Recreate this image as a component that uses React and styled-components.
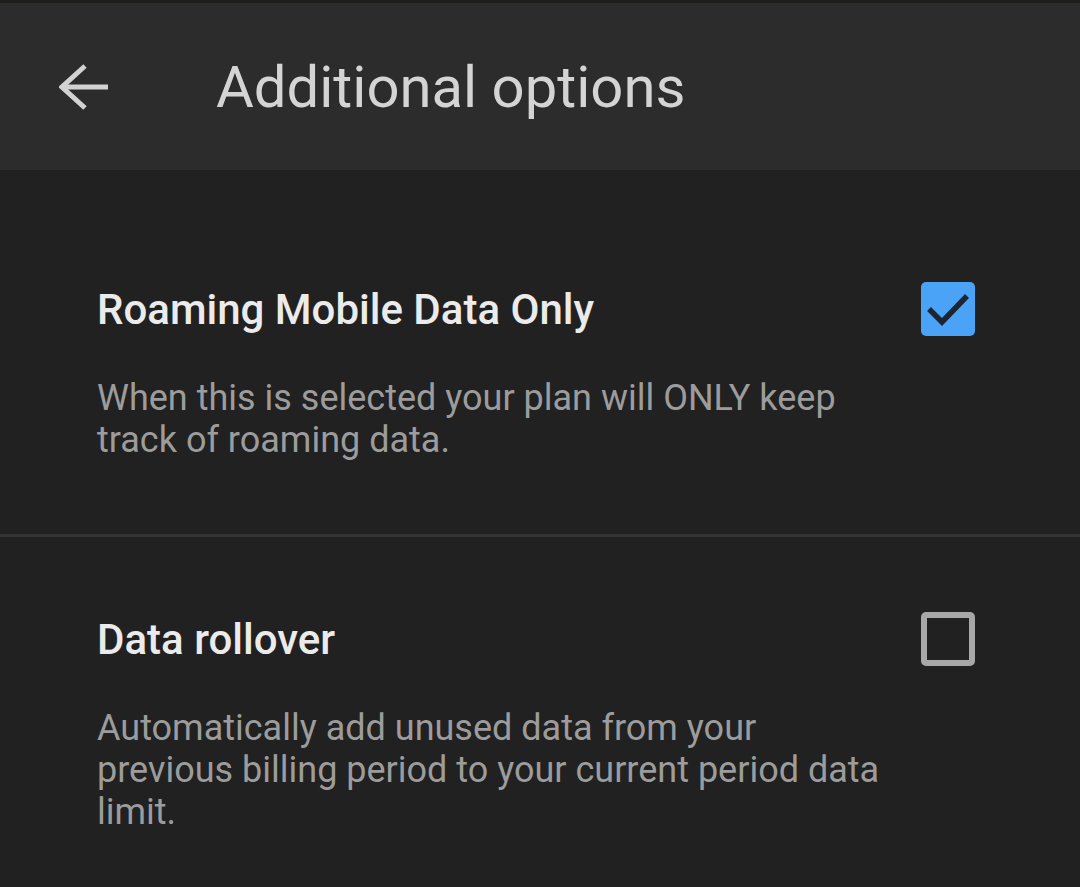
import React, { useState } from "react";
import styled, { createGlobalStyle } from "styled-components";

const GlobalStyle = createGlobalStyle`
  html, body {
    margin: 0;
    padding: 0;
    background: #212121;
  }
  body {
    font-family: Roboto, "Noto Sans", sans-serif;
    -webkit-font-smoothing: antialiased;
  }
  * { box-sizing: border-box; }
`;

const Page = styled.div`
  min-height: 100vh;
  background: #212121;
  display: flex;
  flex-direction: column;
`;

const StatusStrip = styled.div`
  height: 3px;
  background: #1d1e1c;
`;

const Header = styled.header`
  height: 167px;
  background: #2c2c2c;
  display: flex;
  align-items: center;
  padding-left: 59px;
`;

const BackButton = styled.button`
  display: flex;
  align-items: center;
  justify-content: center;
  padding: 0;
  border: none;
  background: transparent;
  color: #d2d2d2;
  cursor: pointer;
`;

const Title = styled.h1`
  margin: 0 0 0 107px;
  font-size: 58px;
  font-weight: 400;
  color: #d4d4d4;
  letter-spacing: 0;
`;

const List = styled.div`
  padding-top: 37px;
`;

const Row = styled.div`
  padding: 78px 105px 73px 97px;
  border-bottom: ${(p) => (p.$divider ? "3px solid #343434" : "none")};
`;

const RowHead = styled.div`
  display: flex;
  align-items: center;
  justify-content: space-between;
  height: 48px;
`;

const RowTitle = styled.div`
  font-size: 42px;
  font-weight: 500;
  color: #ebebeb;
`;

const Description = styled.p`
  margin: 44px 0 0;
  max-width: 800px;
  font-size: 36px;
  line-height: 42px;
  color: #9c9c9c;
`;

const Box = styled.button`
  width: 54px;
  height: 54px;
  padding: 0;
  border-radius: 5px;
  cursor: pointer;
  display: flex;
  align-items: center;
  justify-content: center;
  background: ${(p) => (p.$checked ? "#4ba3f7" : "transparent")};
  border: ${(p) => (p.$checked ? "none" : "6px solid #a8a8a8")};
`;

const ArrowBack = () => (
  <svg width="50" height="46" viewBox="0 0 50 46" fill="none">
    <path d="M26 2 L3 23 L26 44" stroke="currentColor" strokeWidth="5" strokeLinejoin="miter" />
    <path d="M3.5 23 H49" stroke="currentColor" strokeWidth="5" />
  </svg>
);

const Checkbox = ({ checked, onToggle }) => (
  <Box $checked={checked} onClick={onToggle} aria-checked={checked} role="checkbox">
    {checked && (
      <svg width="54" height="54" viewBox="0 0 54 54" fill="none">
        <path d="M8 27 L21 40 L46 14" stroke="#1c2531" strokeWidth="5.5" />
      </svg>
    )}
  </Box>
);

const options = [
  {
    id: "roaming",
    title: "Roaming Mobile Data Only",
    text: "When this is selected your plan will ONLY keep track of roaming data.",
  },
  {
    id: "rollover",
    title: "Data rollover",
    text: "Automatically add unused data from your previous billing period to your current period data limit.",
  },
];

const App = () => {
  const [checked, setChecked] = useState({ roaming: true, rollover: false });

  return (
    <Page>
      <GlobalStyle />
      <StatusStrip />
      <Header>
        <BackButton aria-label="Back">
          <ArrowBack />
        </BackButton>
        <Title>Additional options</Title>
      </Header>
      <List>
        {options.map((o, i) => (
          <Row key={o.id} $divider={i < options.length - 1}>
            <RowHead>
              <RowTitle>{o.title}</RowTitle>
              <Checkbox
                checked={checked[o.id]}
                onToggle={() => setChecked((c) => ({ ...c, [o.id]: !c[o.id] }))}
              />
            </RowHead>
            <Description>{o.text}</Description>
          </Row>
        ))}
      </List>
    </Page>
  );
};

export default App;
